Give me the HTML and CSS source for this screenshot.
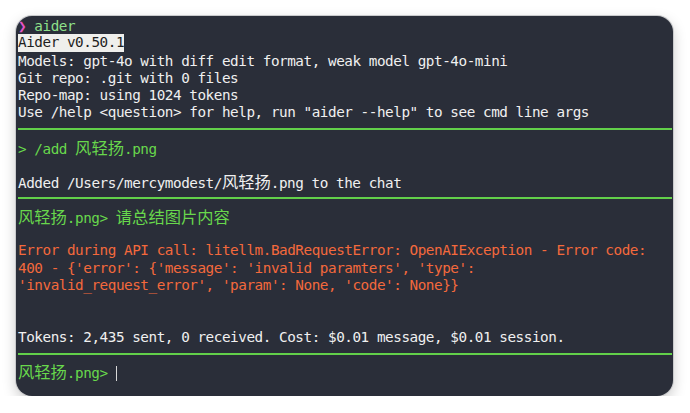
FILE: index.html
```html
<!DOCTYPE html>
<html lang="zh">
<head>
<meta charset="utf-8">
<title>aider</title>
<link rel="stylesheet" href="styles.css">
</head>
<body>
<div class="term">
  <div class="row"><span class="chev">❯</span> <span class="cmd">aider</span></div>
  <div class="row"><span class="inv">Aider v0.50.1</span></div>
  <div class="row">Models: gpt-4o with diff edit format, weak model gpt-4o-mini</div>
  <div class="row">Git repo: .git with 0 files</div>
  <div class="row">Repo-map: using 1024 tokens</div>
  <div class="row">Use /help &lt;question&gt; for help, run "aider --help" to see cmd line args</div>
  <div class="row rule"><span class="line"></span></div>
  <div class="row green">&gt; /add <span class="cjk">风轻扬</span>.png</div>
  <div class="row"></div>
  <div class="row">Added /Users/mercymodest/<span class="cjk">风轻扬</span>.png to the chat</div>
  <div class="row rule"><span class="line"></span></div>
  <div class="row green"><span class="cjk">风轻扬</span>.png&gt; <span class="cjk">请总结图片内容</span></div>
  <div class="row"></div>
  <div class="row err">Error during API call: litellm.BadRequestError: OpenAIException - Error code:</div>
  <div class="row err">400 - {'error': {'message': 'invalid paramters', 'type':</div>
  <div class="row err">'invalid_request_error', 'param': None, 'code': None}}</div>
  <div class="row"></div>
  <div class="row"></div>
  <div class="row">Tokens: 2,435 sent, 0 received. Cost: $0.01 message, $0.01 session.</div>
  <div class="row rule"><span class="line"></span></div>
  <div class="row green"><span class="cjk">风轻扬</span>.png&gt; <span class="cursor"></span></div>
</div>
</body>
</html>
```

FILE: styles.css
```css
html, body {
  margin: 0;
  padding: 0;
  background: #ffffff;
}

body {
  padding: 16px 0 0 16px;
}

.term {
  box-sizing: border-box;
  width: 657px;
  height: 380px;
  background: #2a2e39;
  border-radius: 16px;
  box-shadow: 0 0 0 1px #c9cacc, 0 5px 14px rgba(0, 0, 0, 0.22);
  padding: 2.2px 1px 0 2px;
  overflow: hidden;
  font-family: "DejaVu Sans Mono", "Noto Sans CJK SC", monospace;
  font-size: 14.3px;
  letter-spacing: -0.45px;
  color: #f0f0f0;
}

.row {
  height: 17.25px;
  line-height: 17.25px;
  white-space: pre;
}

.chev {
  color: #e454c8;
  font-weight: bold;
}

.cmd {
  color: #8fe08a;
}

.inv {
  background: #efefec;
  color: #1e1e1e;
  display: inline-block;
  height: 17.25px;
  vertical-align: top;
  margin-top: -1px;
}

.green {
  color: #68d84c;
}

.err {
  color: #f4693c;
}

.cjk {
  font-family: "Noto Sans CJK SC", sans-serif;
  font-size: 16.3px;
  letter-spacing: 0;
  line-height: 1;
}

.rule {
  display: flex;
  align-items: center;
}

.line {
  display: block;
  flex: 1;
  height: 2px;
  margin-top: -2px;
  background: #62d04a;
}

.cursor {
  display: inline-block;
  width: 1px;
  height: 15px;
  background: #d8d8d8;
  vertical-align: -3px;
}
```
